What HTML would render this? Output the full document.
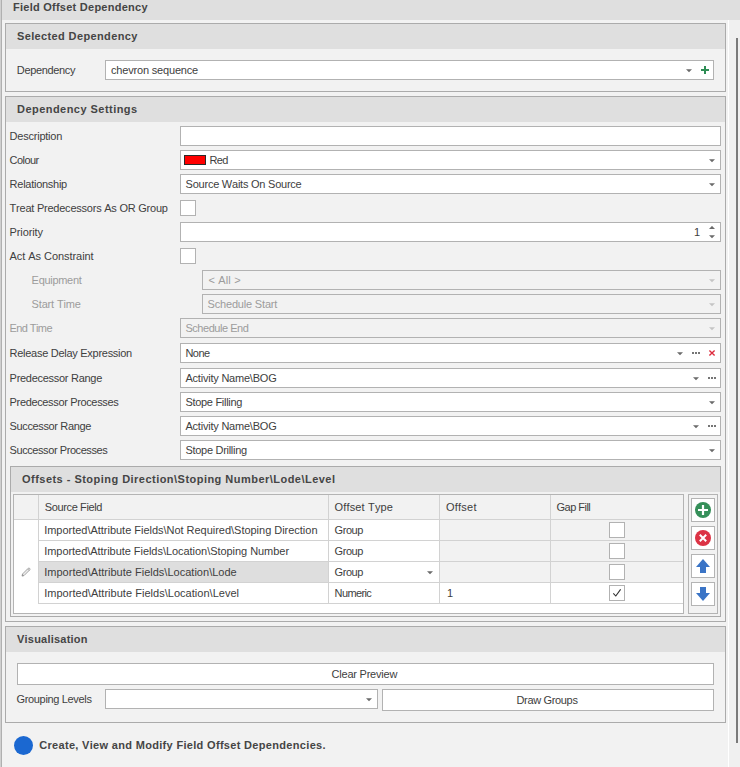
<!DOCTYPE html>
<html><head><meta charset="utf-8"><title>Field Offset Dependency</title>
<style>
html,body{margin:0;padding:0}
body{width:740px;height:767px;overflow:hidden;background:#f2f2f2;position:relative;font-family:"Liberation Sans", sans-serif;font-size:11px}
#r{position:absolute;left:0;top:0;width:740px;height:767px;overflow:hidden;background:#f2f2f2}
#r div,#r svg,#r span{position:absolute}
.t{white-space:pre;line-height:13px;font-size:11px;font-kerning:none}
</style></head><body><div id="r">
<div style="left:0px;top:0px;width:740px;height:20px;background:#dfdfdf;"></div>
<div style="left:728px;top:20px;width:1px;height:747px;background:#ffffff;"></div>
<div style="left:729px;top:20px;width:11px;height:747px;background:#f0f0f0;"></div>
<div style="left:0px;top:0px;width:1px;height:767px;background:#d0d0d0;"></div>
<div style="left:1px;top:0px;width:1px;height:767px;background:#b0b0b0;"></div>
<div style="left:736px;top:38px;width:2px;height:705px;background:#7a7a7a;"></div>
<div style="left:5px;top:23px;width:721px;height:69px;background:#f2f2f2;border:1px solid #ababab;box-sizing:border-box;"></div>
<div style="left:6px;top:24px;width:719px;height:25px;background:#dfdfdf;"></div>
<div style="left:105px;top:60px;width:609px;height:20px;background:#fff;border:1px solid #b2b2b2;box-sizing:border-box;"></div>
<svg style="left:686px;top:69px" width="6" height="4" viewBox="0 0 6 4"><polygon points="0,0.2 6,0.2 3,3.2" fill="#6a6a6a"/></svg>
<div style="left:701px;top:69px;width:8px;height:2px;background:#2e8d55"></div>
<div style="left:704px;top:66px;width:2px;height:8px;background:#2e8d55"></div>
<div style="left:5px;top:96px;width:721px;height:526px;background:#f2f2f2;border:1px solid #ababab;box-sizing:border-box;"></div>
<div style="left:6px;top:97px;width:719px;height:25px;background:#dfdfdf;"></div>
<div style="left:180px;top:126px;width:541px;height:20px;background:#fff;border:1px solid #b2b2b2;box-sizing:border-box;"></div>
<div style="left:180px;top:150px;width:541px;height:20px;background:#fff;border:1px solid #b2b2b2;box-sizing:border-box;"></div>
<svg style="left:709px;top:159px" width="6" height="4" viewBox="0 0 6 4"><polygon points="0,0.2 6,0.2 3,3.2" fill="#6a6a6a"/></svg>
<div style="left:184px;top:155px;width:22px;height:10px;background:#ff0000;border:1px solid #2a2a2a;box-sizing:border-box;"></div>
<div style="left:180px;top:174px;width:541px;height:20px;background:#fff;border:1px solid #b2b2b2;box-sizing:border-box;"></div>
<svg style="left:709px;top:183px" width="6" height="4" viewBox="0 0 6 4"><polygon points="0,0.2 6,0.2 3,3.2" fill="#6a6a6a"/></svg>
<div style="left:180px;top:200px;width:16px;height:16px;background:#fff;border:1px solid #b2b2b2;box-sizing:border-box;"></div>
<div style="left:180px;top:222px;width:541px;height:20px;background:#fff;border:1px solid #b2b2b2;box-sizing:border-box;"></div>
<svg style="left:709px;top:226px" width="6" height="4" viewBox="0 0 6 4"><polygon points="0,2.9 6,2.9 3,-0.1" fill="#6a6a6a"/></svg>
<svg style="left:709px;top:235px" width="6" height="4" viewBox="0 0 6 4"><polygon points="0,0.2 6,0.2 3,3.2" fill="#6a6a6a"/></svg>
<div style="left:180px;top:248px;width:16px;height:16px;background:#fff;border:1px solid #b2b2b2;box-sizing:border-box;"></div>
<div style="left:202px;top:270px;width:519px;height:20px;background:#f2f2f2;border:1px solid #b2b2b2;box-sizing:border-box;"></div>
<svg style="left:709px;top:279px" width="6" height="4" viewBox="0 0 6 4"><polygon points="0,0.2 6,0.2 3,3.2" fill="#c4c4c4"/></svg>
<div style="left:202px;top:294px;width:519px;height:20px;background:#f2f2f2;border:1px solid #b2b2b2;box-sizing:border-box;"></div>
<svg style="left:709px;top:303px" width="6" height="4" viewBox="0 0 6 4"><polygon points="0,0.2 6,0.2 3,3.2" fill="#c4c4c4"/></svg>
<div style="left:180px;top:318px;width:541px;height:20px;background:#f2f2f2;border:1px solid #b2b2b2;box-sizing:border-box;"></div>
<svg style="left:709px;top:327px" width="6" height="4" viewBox="0 0 6 4"><polygon points="0,0.2 6,0.2 3,3.2" fill="#c4c4c4"/></svg>
<div style="left:180px;top:343px;width:541px;height:20px;background:#fff;border:1px solid #b2b2b2;box-sizing:border-box;"></div>
<svg style="left:677px;top:352px" width="6" height="4" viewBox="0 0 6 4"><polygon points="0,0.2 6,0.2 3,3.2" fill="#6a6a6a"/></svg>
<div style="left:692px;top:352px;width:2px;height:2px;background:#757575"></div>
<div style="left:695px;top:352px;width:2px;height:2px;background:#757575"></div>
<div style="left:698px;top:352px;width:2px;height:2px;background:#757575"></div>
<svg style="left:708px;top:349px" width="8" height="8" viewBox="0 0 8 8"><path d="M1.4 1.4L6.6 6.6M6.6 1.4L1.4 6.6" stroke="#dd2a3c" stroke-width="1.35" fill="none"/></svg>
<div style="left:180px;top:368px;width:541px;height:20px;background:#fff;border:1px solid #b2b2b2;box-sizing:border-box;"></div>
<svg style="left:693px;top:377px" width="6" height="4" viewBox="0 0 6 4"><polygon points="0,0.2 6,0.2 3,3.2" fill="#6a6a6a"/></svg>
<div style="left:708px;top:377px;width:2px;height:2px;background:#757575"></div>
<div style="left:711px;top:377px;width:2px;height:2px;background:#757575"></div>
<div style="left:714px;top:377px;width:2px;height:2px;background:#757575"></div>
<div style="left:180px;top:392px;width:541px;height:20px;background:#fff;border:1px solid #b2b2b2;box-sizing:border-box;"></div>
<svg style="left:709px;top:401px" width="6" height="4" viewBox="0 0 6 4"><polygon points="0,0.2 6,0.2 3,3.2" fill="#6a6a6a"/></svg>
<div style="left:180px;top:416px;width:541px;height:20px;background:#fff;border:1px solid #b2b2b2;box-sizing:border-box;"></div>
<svg style="left:693px;top:425px" width="6" height="4" viewBox="0 0 6 4"><polygon points="0,0.2 6,0.2 3,3.2" fill="#6a6a6a"/></svg>
<div style="left:708px;top:425px;width:2px;height:2px;background:#757575"></div>
<div style="left:711px;top:425px;width:2px;height:2px;background:#757575"></div>
<div style="left:714px;top:425px;width:2px;height:2px;background:#757575"></div>
<div style="left:180px;top:440px;width:541px;height:20px;background:#fff;border:1px solid #b2b2b2;box-sizing:border-box;"></div>
<svg style="left:709px;top:449px" width="6" height="4" viewBox="0 0 6 4"><polygon points="0,0.2 6,0.2 3,3.2" fill="#6a6a6a"/></svg>
<div style="left:10px;top:466px;width:711px;height:151px;background:#f2f2f2;border:1px solid #ababab;box-sizing:border-box;"></div>
<div style="left:11px;top:467px;width:709px;height:25px;background:#dfdfdf;"></div>
<div style="left:13px;top:494px;width:671px;height:120px;background:#fff;border:1px solid #b4b4b4;box-sizing:border-box;"></div>
<div style="left:14px;top:495px;width:669px;height:24px;background:#f2f2f2;"></div>
<div style="left:14px;top:519px;width:669px;height:1px;background:#d2d2d2;"></div>
<div style="left:440px;top:520px;width:243px;height:63px;background:#f2f2f2;"></div>
<div style="left:39px;top:562px;width:289px;height:21px;background:#dedede;"></div>
<div style="left:39px;top:540px;width:644px;height:1px;background:#d2d2d2;"></div>
<div style="left:39px;top:561px;width:644px;height:1px;background:#d2d2d2;"></div>
<div style="left:39px;top:582px;width:644px;height:1px;background:#d2d2d2;"></div>
<div style="left:39px;top:603px;width:644px;height:1px;background:#d2d2d2;"></div>
<div style="left:38px;top:495px;width:1px;height:109px;background:#d2d2d2;"></div>
<div style="left:328px;top:495px;width:1px;height:109px;background:#d2d2d2;"></div>
<div style="left:439px;top:495px;width:1px;height:109px;background:#d2d2d2;"></div>
<div style="left:550px;top:495px;width:1px;height:109px;background:#d2d2d2;"></div>
<div style="left:329px;top:562px;width:110px;height:20px;background:#fff;"></div>
<svg style="left:427px;top:571px" width="6" height="4" viewBox="0 0 6 4"><polygon points="0,0.2 6,0.2 3,3.2" fill="#6a6a6a"/></svg>
<div style="left:609px;top:522px;width:16px;height:16px;background:#fff;border:1px solid #b2b2b2;box-sizing:border-box;"></div>
<div style="left:609px;top:543px;width:16px;height:16px;background:#fff;border:1px solid #b2b2b2;box-sizing:border-box;"></div>
<div style="left:609px;top:564px;width:16px;height:16px;background:#fff;border:1px solid #b2b2b2;box-sizing:border-box;"></div>
<div style="left:609px;top:585px;width:16px;height:16px;background:#fff;border:1px solid #b2b2b2;box-sizing:border-box;"></div>
<svg style="left:609px;top:585px" width="16" height="16" viewBox="0 0 16 16"><path d="M4.3 8.3L6.8 11L11.6 4.4" stroke="#303030" stroke-width="1.1" fill="none"/></svg>
<svg style="left:20px;top:566px" width="12" height="12" viewBox="0 0 12 12"><path d="M2 10.1L2.5 8L8.2 2.3Q9 1.7 9.7 2.4Q10.3 3.1 9.8 3.8L4 9.6Z" fill="#ececec" stroke="#9c9c9c" stroke-width="0.9"/><path d="M2 10.1L2.45 8.1L3.9 9.6Z" fill="#8c8c8c"/><path d="M7.6 2.9L9.2 4.5" stroke="#9c9c9c" stroke-width="0.8"/></svg>
<div style="left:688px;top:494px;width:30px;height:120px;background:#f2f2f2;border:1px solid #b4b4b4;box-sizing:border-box;"></div>
<div style="left:691px;top:498px;width:24px;height:24px;background:#fff;border:1px solid #b4b4b4;box-sizing:border-box;"></div>
<div style="left:691px;top:526px;width:24px;height:24px;background:#fff;border:1px solid #b4b4b4;box-sizing:border-box;"></div>
<div style="left:691px;top:554px;width:24px;height:24px;background:#fff;border:1px solid #b4b4b4;box-sizing:border-box;"></div>
<div style="left:691px;top:582px;width:24px;height:24px;background:#fff;border:1px solid #b4b4b4;box-sizing:border-box;"></div>
<svg style="left:695px;top:502px" width="16" height="16" viewBox="0 0 16 16"><circle cx="8" cy="8" r="8" fill="#36905a"/><path d="M8 3V13M3 8H13" stroke="#fff" stroke-width="2.2"/></svg>
<svg style="left:695px;top:530px" width="16" height="16" viewBox="0 0 16 16"><circle cx="8" cy="8" r="8" fill="#dc3345"/><path d="M4.8 4.8L11.2 11.2M11.2 4.8L4.8 11.2" stroke="#fff" stroke-width="2"/></svg>
<svg style="left:695px;top:558px" width="16" height="16" viewBox="0 0 16 16"><path d="M8 1L15 9H11V15H5V9H1Z" fill="#3a74c6"/></svg>
<svg style="left:695px;top:586px" width="16" height="16" viewBox="0 0 16 16"><path d="M8 15L15 7H11V1H5V7H1Z" fill="#3a74c6"/></svg>
<div style="left:5px;top:626px;width:721px;height:97px;background:#f2f2f2;border:1px solid #ababab;box-sizing:border-box;"></div>
<div style="left:6px;top:627px;width:719px;height:25px;background:#dfdfdf;"></div>
<div style="left:17px;top:663px;width:697px;height:22px;background:#fff;border:1px solid #b2b2b2;box-sizing:border-box;"></div>
<div style="left:105px;top:689px;width:273px;height:20px;background:#fff;border:1px solid #b2b2b2;box-sizing:border-box;"></div>
<svg style="left:366px;top:698px" width="6" height="4" viewBox="0 0 6 4"><polygon points="0,0.2 6,0.2 3,3.2" fill="#6a6a6a"/></svg>
<div style="left:382px;top:689px;width:332px;height:22px;background:#fff;border:1px solid #b2b2b2;box-sizing:border-box;"></div>
<div style="left:13.6px;top:735.5px;width:19px;height:19px;border-radius:50%;background:#1b68d1"></div>
<span class="t" style="left:13.00px;top:1px;color:#454545;letter-spacing:0.252px;font-weight:bold;">Field Offset Dependency</span>
<span class="t" style="left:17.00px;top:30px;color:#454545;letter-spacing:0.367px;font-weight:bold;">Selected Dependency</span>
<span class="t" style="left:16.80px;top:64px;color:#404040;letter-spacing:-0.341px;">Dependency</span>
<span class="t" style="left:111.00px;top:64px;color:#404040;letter-spacing:-0.179px;">chevron sequence</span>
<span class="t" style="left:17.00px;top:103px;color:#454545;letter-spacing:0.459px;font-weight:bold;">Dependency Settings</span>
<span class="t" style="left:9.60px;top:130px;color:#404040;letter-spacing:-0.230px;">Description</span>
<span class="t" style="left:9.60px;top:154px;color:#404040;letter-spacing:-0.548px;">Colour</span>
<span class="t" style="left:209.60px;top:154px;color:#404040;letter-spacing:-0.681px;">Red</span>
<span class="t" style="left:9.60px;top:178px;color:#404040;letter-spacing:-0.265px;">Relationship</span>
<span class="t" style="left:185.60px;top:178px;color:#404040;letter-spacing:-0.234px;">Source Waits On Source</span>
<span class="t" style="left:9.60px;top:202px;color:#404040;letter-spacing:-0.232px;">Treat Predecessors As OR Group</span>
<span class="t" style="left:9.60px;top:226px;color:#404040;letter-spacing:-0.132px;">Priority</span>
<span class="t" style="left:694.00px;top:226px;color:#404040;">1</span>
<span class="t" style="left:9.60px;top:250px;color:#404040;letter-spacing:-0.057px;">Act As Constraint</span>
<span class="t" style="left:31.60px;top:274px;color:#9c9c9c;letter-spacing:-0.304px;">Equipment</span>
<span class="t" style="left:208.40px;top:274px;color:#9c9c9c;letter-spacing:0.173px;">&lt; All &gt;</span>
<span class="t" style="left:31.60px;top:298px;color:#9c9c9c;letter-spacing:-0.167px;">Start Time</span>
<span class="t" style="left:207.60px;top:298px;color:#9c9c9c;letter-spacing:-0.185px;">Schedule Start</span>
<span class="t" style="left:9.60px;top:322px;color:#9c9c9c;letter-spacing:-0.592px;">End Time</span>
<span class="t" style="left:185.40px;top:322px;color:#9c9c9c;letter-spacing:-0.453px;">Schedule End</span>
<span class="t" style="left:9.60px;top:347px;color:#404040;letter-spacing:-0.278px;">Release Delay Expression</span>
<span class="t" style="left:185.40px;top:347px;color:#404040;letter-spacing:-0.526px;">None</span>
<span class="t" style="left:9.60px;top:372px;color:#404040;letter-spacing:-0.282px;">Predecessor Range</span>
<span class="t" style="left:185.40px;top:372px;color:#404040;letter-spacing:-0.212px;">Activity Name\BOG</span>
<span class="t" style="left:9.60px;top:396px;color:#404040;letter-spacing:-0.353px;">Predecessor Processes</span>
<span class="t" style="left:185.40px;top:396px;color:#404040;letter-spacing:-0.293px;">Stope Filling</span>
<span class="t" style="left:9.60px;top:420px;color:#404040;letter-spacing:-0.365px;">Successor Range</span>
<span class="t" style="left:185.40px;top:420px;color:#404040;letter-spacing:-0.212px;">Activity Name\BOG</span>
<span class="t" style="left:9.60px;top:444px;color:#404040;letter-spacing:-0.426px;">Successor Processes</span>
<span class="t" style="left:185.40px;top:444px;color:#404040;letter-spacing:-0.285px;">Stope Drilling</span>
<span class="t" style="left:22.00px;top:473px;color:#454545;letter-spacing:0.471px;font-weight:bold;">Offsets - Stoping Direction\Stoping Number\Lode\Level</span>
<span class="t" style="left:44.80px;top:501px;color:#404040;letter-spacing:-0.376px;">Source Field</span>
<span class="t" style="left:334.60px;top:501px;color:#404040;letter-spacing:0.147px;">Offset Type</span>
<span class="t" style="left:446.00px;top:501px;color:#404040;letter-spacing:0.223px;">Offset</span>
<span class="t" style="left:556.60px;top:501px;color:#404040;letter-spacing:-0.536px;">Gap Fill</span>
<span class="t" style="left:44.20px;top:524px;color:#404040;letter-spacing:-0.022px;">Imported\Attribute Fields\Not Required\Stoping Direction</span>
<span class="t" style="left:44.20px;top:545px;color:#404040;letter-spacing:-0.045px;">Imported\Attribute Fields\Location\Stoping Number</span>
<span class="t" style="left:44.20px;top:566px;color:#404040;letter-spacing:0.014px;">Imported\Attribute Fields\Location\Lode</span>
<span class="t" style="left:44.20px;top:587px;color:#404040;letter-spacing:0.026px;">Imported\Attribute Fields\Location\Level</span>
<span class="t" style="left:334.60px;top:524px;color:#404040;letter-spacing:-0.439px;">Group</span>
<span class="t" style="left:334.60px;top:545px;color:#404040;letter-spacing:-0.439px;">Group</span>
<span class="t" style="left:334.60px;top:566px;color:#404040;letter-spacing:-0.439px;">Group</span>
<span class="t" style="left:334.60px;top:587px;color:#404040;letter-spacing:-0.625px;">Numeric</span>
<span class="t" style="left:447.00px;top:587px;color:#404040;">1</span>
<span class="t" style="left:17.00px;top:633px;color:#454545;letter-spacing:0.222px;font-weight:bold;">Visualisation</span>
<span class="t" style="left:331.60px;top:668px;color:#404040;letter-spacing:-0.227px;">Clear Preview</span>
<span class="t" style="left:16.50px;top:693px;color:#404040;letter-spacing:-0.336px;">Grouping Levels</span>
<span class="t" style="left:516.50px;top:694px;color:#404040;letter-spacing:-0.340px;">Draw Groups</span>
<span class="t" style="left:39.20px;top:739px;color:#454545;letter-spacing:0.318px;font-weight:bold;">Create, View and Modify Field Offset Dependencies.</span>
</div></body></html>
